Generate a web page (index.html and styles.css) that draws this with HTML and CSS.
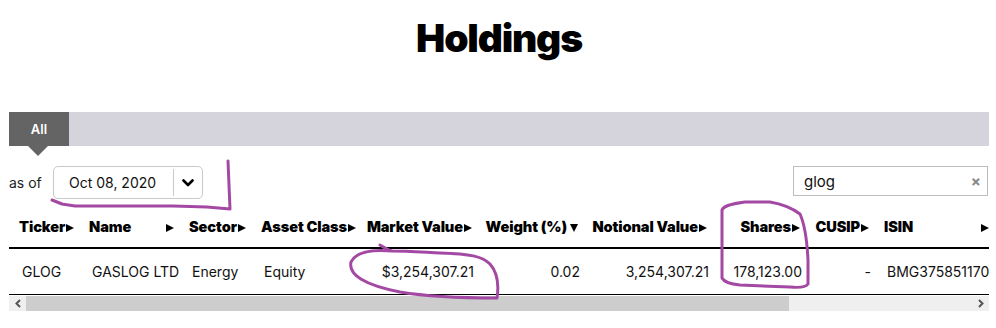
FILE: index.html
```html
<!DOCTYPE html>
<html lang="en">
<head>
<meta charset="utf-8">
<title>Holdings</title>
<link rel="stylesheet" href="styles.css">
</head>
<body>
<div class="page">
  <h1 class="title">Holdings</h1>

  <div class="tabs">
    <div class="tab tab-active">All</div>
  </div>

  <div class="controls">
    <div class="asof">
      <span class="asof-label">as of</span>
      <div class="date-select">
        <span class="date-value">Oct 08, 2020</span>
        <span class="date-toggle">
          <svg width="12" height="8" viewBox="0 0 12 8"><path d="M1.5 1.5 L6 6 L10.5 1.5" fill="none" stroke="#000" stroke-width="2.6" stroke-linecap="round" stroke-linejoin="round"/></svg>
        </span>
      </div>
    </div>
    <div class="search">
      <span class="search-text">glog</span>
      <span class="search-clear">×</span>
    </div>
  </div>

  <div class="table-wrap">
    <table class="holdings">
      <colgroup>
        <col class="c-ticker"><col class="c-name"><col class="c-sector"><col class="c-asset"><col class="c-mv"><col class="c-weight"><col class="c-notional"><col class="c-shares"><col class="c-cusip"><col class="c-isin">
      </colgroup>
      <thead>
        <tr>
          <th><div class="th-inner"><span>Ticker</span><i class="sort"></i></div></th>
          <th><div class="th-inner"><span>Name</span><i class="sort"></i></div></th>
          <th><div class="th-inner"><span>Sector</span><i class="sort"></i></div></th>
          <th><div class="th-inner"><span>Asset Class</span><i class="sort"></i></div></th>
          <th><div class="th-inner th-right"><span>Market Value</span><i class="sort"></i></div></th>
          <th><div class="th-inner th-right"><span>Weight (%)</span><i class="sort sort-down"></i></div></th>
          <th><div class="th-inner th-right"><span>Notional Value</span><i class="sort"></i></div></th>
          <th><div class="th-inner th-right"><span>Shares</span><i class="sort"></i></div></th>
          <th><div class="th-inner th-right"><span>CUSIP</span><i class="sort"></i></div></th>
          <th><div class="th-inner"><span>ISIN</span><i class="sort"></i></div></th>
        </tr>
      </thead>
      <tbody>
        <tr>
          <td>GLOG</td>
          <td>GASLOG LTD</td>
          <td>Energy</td>
          <td>Equity</td>
          <td class="num">$3,254,307.21</td>
          <td class="num">0.02</td>
          <td class="num">3,254,307.21</td>
          <td class="num">178,123.00</td>
          <td class="num">-</td>
          <td>BMG375851170</td>
        </tr>
      </tbody>
    </table>
  </div>

  <div class="hscroll">
    <div class="hs-btn">
      <svg width="8" height="9" viewBox="0 0 8 9"><path d="M6 1 L2.5 4.5 L6 8" fill="none" stroke="#555" stroke-width="2"/></svg>
    </div>
    <div class="hs-track">
      <div class="hs-thumb"></div>
    </div>
    <div class="hs-btn">
      <svg width="8" height="9" viewBox="0 0 8 9"><path d="M2 1 L5.5 4.5 L2 8" fill="none" stroke="#555" stroke-width="2"/></svg>
    </div>
  </div>

  <svg class="annotations" width="996" height="328" viewBox="0 0 996 328">
    <path d="M52,200 L62,204 L75,206 L173,206 L207,207 L230,209 L229,185 L228,161"/>
    <path d="M380,245 C385,248 388,250 392,251 C370,249 356,252 351,262 C348,275 365,285 400,292 C430,297 470,298 497,298 C499,285 497,272 490,264 C482,256 470,254 440,253 C420,252 405,251 392,251"/>
    <path d="M722,278 L722,210 C724,206 730,204 745,202 L770,202 C782,204 792,208 800,214 C805,225 807,240 808,260 L808,284 C806,287 800,288 790,287 L740,285 C730,284 724,282 722,278 Z"/>
  </svg>
</div>
</body>
</html>
```

FILE: styles.css
```css
* { box-sizing: border-box; }

html, body {
  margin: 0;
  padding: 0;
  background: #fff;
}

body {
  font-family: "Inter", "Liberation Sans", sans-serif;
  color: #111;
}

.page {
  position: relative;
  width: 996px;
  height: 328px;
  padding: 0 7px 0 9px;
  overflow: hidden;
}

.title {
  margin: 14px 0 0;
  height: 48px;
  line-height: 48px;
  font-size: 39px;
  font-weight: 900;
  text-align: center;
  color: #000;
  letter-spacing: -1.2px;
}

.tabs {
  margin-top: 50px;
  height: 34px;
  background: #d5d4dd;
  display: flex;
}

.tab {
  width: 60px;
  height: 34px;
  line-height: 34px;
  text-align: center;
  font-size: 13px;
  font-weight: 600;
  color: #fff;
}

.tab-active {
  position: relative;
  background: #646464;
}

.tab-active::after {
  content: "";
  position: absolute;
  left: 19px;
  top: 34px;
  border-left: 10px solid transparent;
  border-right: 10px solid transparent;
  border-top: 10px solid #646464;
}

.controls {
  margin-top: 20px;
  display: flex;
  justify-content: space-between;
  align-items: flex-start;
  padding-right: 1px;
}

.asof {
  display: flex;
  align-items: center;
  height: 33px;
}

.asof-label {
  font-size: 14px;
  color: #222;
  width: 44px;
}

.date-select {
  width: 150px;
  height: 33px;
  border: 1px solid #c9c9c9;
  border-radius: 5px;
  display: flex;
  align-items: center;
}

.date-value {
  flex: 1;
  padding-left: 15px;
  font-size: 14px;
  color: #111;
}

.date-toggle {
  width: 29px;
  height: 27px;
  border-left: 1px solid #c9c9c9;
  display: flex;
  align-items: center;
  justify-content: center;
}

.search {
  width: 195px;
  height: 30px;
  border: 1px solid #bdbdbd;
  display: flex;
  align-items: center;
  justify-content: space-between;
  padding: 0 6px 0 10px;
}

.search-text {
  font-size: 15px;
  color: #111;
}

.search-clear {
  font-size: 15px;
  font-weight: 700;
  color: #8a8a8a;
}

.table-wrap {
  margin-top: 7px;
  width: 980px;
  overflow: hidden;
}

.holdings {
  border-collapse: collapse;
  table-layout: fixed;
  width: 985px;
}

.c-ticker { width: 70px; }
.c-name { width: 100px; }
.c-sector { width: 72px; }
.c-asset { width: 107px; }
.c-mv { width: 119px; }
.c-weight { width: 106px; }
.c-notional { width: 129px; }
.c-shares { width: 93px; }
.c-cusip { width: 69px; }
.c-isin { width: 120px; }

.holdings th {
  padding: 12px 5px 10px 10px;
  border-bottom: 2px solid #000;
  font-size: 14.6px;
  font-weight: 900;
  color: #000;
  line-height: 19px;
  text-align: left;
  white-space: nowrap;
  letter-spacing: -0.1px;
}

.th-inner {
  display: flex;
  align-items: center;
  justify-content: space-between;
}

.th-right {
  justify-content: flex-end;
}

.sort {
  display: inline-block;
  width: 0;
  height: 0;
  border-left: 8px solid #000;
  border-top: 4.5px solid transparent;
  border-bottom: 4.5px solid transparent;
  margin-left: 1px;
  flex: none;
}

.sort-down {
  border-left: 4.5px solid transparent;
  border-right: 4.5px solid transparent;
  border-top: 8px solid #000;
  border-bottom: 0;
  margin-left: 3px;
}

.holdings td {
  height: 46px;
  padding: 0 3px 0 13px;
  border-bottom: 1px solid #000;
  font-size: 14px;
  color: #111;
  white-space: nowrap;
  overflow: hidden;
}

.holdings td.num {
  text-align: right;
}

.hscroll {
  margin-top: 1px;
  width: 980px;
  height: 15px;
  display: flex;
  background: #efefef;
}

.hs-btn {
  width: 17px;
  height: 15px;
  display: flex;
  align-items: center;
  justify-content: center;
  flex: none;
}

.hs-track {
  flex: 1;
  height: 15px;
}

.hs-thumb {
  width: 763px;
  height: 15px;
  background: #cdcdcd;
}

.annotations {
  position: absolute;
  left: 0;
  top: 0;
  pointer-events: none;
}

.annotations path {
  fill: none;
  stroke: #a349a4;
  stroke-width: 3;
  stroke-linecap: round;
  stroke-linejoin: round;
}
```
